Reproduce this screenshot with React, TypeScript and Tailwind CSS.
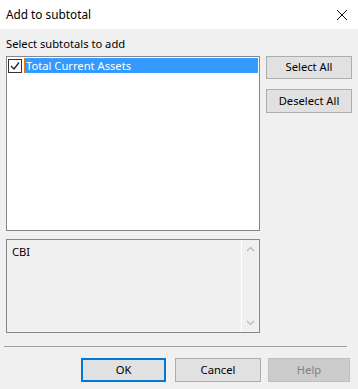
import React from 'react';

export default function App() {
  return (
    <div className="w-[358px] h-[389px] bg-[#f0f0f0] flex flex-col text-[11.2px] text-black" style={{ fontFamily: '"Noto Sans", "Open Sans", sans-serif' }}>
      {/* Title bar */}
      <div className="h-[29px] bg-white flex items-center justify-between pl-[6px] pr-[8px] shrink-0">
        <span className="text-[11.8px]">Add to subtotal</span>
        <svg width="12" height="12" viewBox="0 0 12 12" className="mr-[2px]">
          <path d="M1 1L11 11M11 1L1 11" stroke="#111" strokeWidth="1" />
        </svg>
      </div>

      <div className="flex flex-col px-[6px] pt-[7px]">
        <div className="leading-[16px] h-[20px]">Select subtotals to add</div>
        <div className="flex gap-[6px]">
          {/* List box */}
          <div className="w-[254px] h-[175px] bg-white border border-[#828790] pt-[1px]">
            <div className="flex items-center h-[15px]">
              <div className="w-[14px] h-[14px] border border-[#333] bg-white flex items-center justify-center ml-[1px]">
                <svg width="10" height="10" viewBox="0 0 10 10">
                  <path d="M1 5L4 8L9 1.5" stroke="#222" strokeWidth="1.3" fill="none" />
                </svg>
              </div>
              <div className="ml-[2px] flex-1 h-[15px] bg-[#3399ff] text-white border border-dotted border-[#e08020] flex items-center pl-[1px] mr-[1px] leading-none">
                Total Current Assets
              </div>
            </div>
          </div>
          {/* Side buttons */}
          <div className="flex flex-col gap-[10px] w-[86px]">
            <button className="h-[23px] bg-[#e1e1e1] border border-[#adadad]">Select All</button>
            <button className="h-[24px] bg-[#e1e1e1] border border-[#adadad]">Deselect All</button>
          </div>
        </div>

        {/* Description box */}
        <div className="mt-[8px] w-[254px] h-[94px] border border-[#828790] flex">
          <div className="flex-1 pl-[5px] pt-[4px] leading-[16px]">CBI</div>
          <div className="w-[18px] border-l border-white flex flex-col items-center justify-between py-[6px]">
            <svg width="9" height="6" viewBox="0 0 9 6">
              <path d="M1 5L4.5 1.5L8 5" stroke="#c0c0c0" strokeWidth="1.5" fill="none" />
            </svg>
            <svg width="9" height="6" viewBox="0 0 9 6">
              <path d="M1 1L4.5 4.5L8 1" stroke="#c0c0c0" strokeWidth="1.5" fill="none" />
            </svg>
          </div>
        </div>
      </div>

      {/* Separator */}
      <div className="mx-[4px] mt-[13px] h-px bg-[#a0a0a0] w-[343px]" />

      {/* Footer buttons */}
      <div className="flex justify-end pr-[8px] mt-[11px]">
        <button className="w-[85px] h-[24px] bg-[#e1e1e1] border-2 border-[#0078d7]">OK</button>
        <button className="ml-[9px] w-[86px] h-[24px] bg-[#e1e1e1] border border-[#adadad]">Cancel</button>
        <button className="ml-[7px] w-[82px] h-[24px] bg-[#cccccc] border border-[#bfbfbf] text-[#838383]">Help</button>
      </div>
    </div>
  );
}
